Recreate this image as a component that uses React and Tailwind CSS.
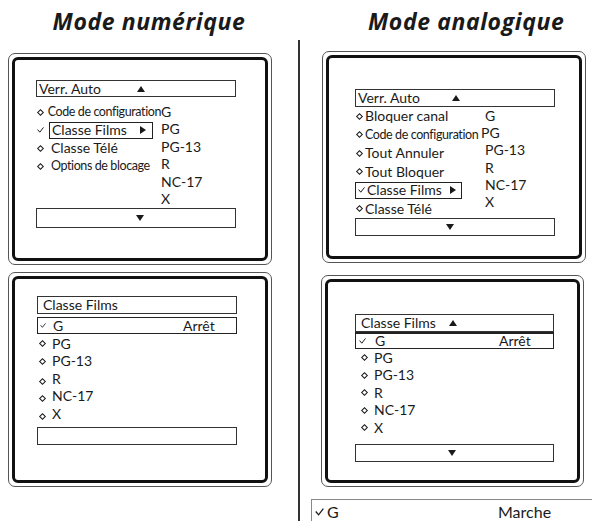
import React from 'react';

const Up = () => (
  <svg width="8" height="6" viewBox="0 0 8 6"><path d="M4 0L8 6H0z" fill="#1a1a1a" /></svg>
);
const Down = () => (
  <svg width="8" height="6" viewBox="0 0 8 6"><path d="M0 0H8L4 6z" fill="#1a1a1a" /></svg>
);
const Right = () => (
  <svg width="6" height="8" viewBox="0 0 6 8"><path d="M0 0L6 4L0 8z" fill="#1a1a1a" /></svg>
);
const Check = ({ size = 7 }) => (
  <svg width={size} height={size - 1} viewBox="0 0 7 6">
    <path d="M0.6 2.6L2.8 5.2L6.5 0.4" fill="none" stroke="#1a1a1a" strokeWidth="1" />
  </svg>
);
const Diamond = ({ className = '' }) => (
  <span className={`block w-[5px] h-[5px] border border-[#1a1a1a] rotate-45 ${className}`} />
);

// double framed screen, thin grey outside and heavy black inside
const Panel = ({ className = '', inner = '', children }) => (
  <div className={`shrink-0 border border-[#555] rounded-[7px] p-[3px] ${className}`}>
    <div className={`h-full border-[3px] border-[#111] rounded-[6px] ${inner}`}>{children}</div>
  </div>
);

const Row = ({ children, h = 'h-[18px]', mark = 'w-[15px] pl-[2px]', small }) => (
  <div className={`flex items-center ${h}`}>
    <span className={`flex items-center ${mark}`}>
      <Diamond />
    </span>
    <span className={small ? 'text-[12.5px] tracking-[-0.4px] whitespace-nowrap' : 'whitespace-nowrap'}>{children}</span>
  </div>
);

export default function App() {
  return (
    <div className="w-[592px] h-[521px] bg-white overflow-hidden flex font-['Lato',sans-serif] text-[14px] text-[#1a1a1a] leading-none">
      {/* Mode numérique */}
      <div className="w-[298px] shrink-0 flex flex-col">
        <div className="h-[40px] shrink-0 pt-[8px] text-center font-['Open_Sans',sans-serif] text-[23px] font-bold italic leading-[26px] tracking-[0.6px]">Mode numérique</div>

        <Panel className="ml-[8px] mt-[13px] w-[264px] h-[212px]" inner="pl-[21px] pt-[20px]">
          <div className="w-[200px] h-[17px] border border-[#333] flex items-center pl-[2px]">
            <span className="w-[98px]">Verr. Auto</span>
            <Up />
          </div>
          <div className="flex mt-[6px] h-[104px]">
            <div className="w-[125px]">
              <Row small>Code de configuration</Row>
              <div className="flex items-center h-[18px]">
                <span className="w-[13px] pl-[1px]"><Check /></span>
                <span className="w-[104px] h-[17px] border border-[#222] flex items-center justify-between pl-[2px] pr-[6px]">
                  Classe Films <Right />
                </span>
              </div>
              <Row>Classe Télé</Row>
              <Row small>Options de blocage</Row>
            </div>
            <div className="flex flex-col leading-[17.4px]">
              <span>G</span>
              <span>PG</span>
              <span>PG-13</span>
              <span>R</span>
              <span>NC-17</span>
              <span>X</span>
            </div>
          </div>
          <div className="mt-[1px] w-[200px] h-[20px] border border-[#333] flex items-center justify-center pl-[8px]">
            <Down />
          </div>
        </Panel>

        <Panel className="ml-[8px] mt-[7px] w-[264px] h-[215px]" inner="pl-[22px] pt-[17px]">
          <div className="w-[200px] h-[18px] border border-[#333] flex items-center pl-[5px]">Classe Films</div>
          <div className="mt-[3px] w-[200px] h-[17px] border border-[#222] flex items-center pl-[2px]">
            <span className="w-[13px]"><Check size={6} /></span>
            <span className="w-[130px]">G</span>
            <span>Arrêt</span>
          </div>
          <div className="mt-[1px]">
            <Row h="h-[17.5px]" mark="w-[15px] pl-[3px]">PG</Row>
            <Row h="h-[17.5px]" mark="w-[15px] pl-[3px]">PG-13</Row>
            <Row h="h-[17.5px]" mark="w-[15px] pl-[3px] pt-[5px]">R</Row>
            <Row h="h-[17.5px]" mark="w-[15px] pl-[3px] pt-[5px]">NC-17</Row>
            <Row h="h-[17.5px]" mark="w-[15px] pl-[3px] pt-[5px]">X</Row>
          </div>
          <div className="mt-[4px] w-[200px] h-[18px] border border-[#333]" />
        </Panel>
      </div>

      {/* Mode analogique */}
      <div className="flex-1 flex flex-col">
        <div className="h-[40px] shrink-0 pt-[8px] pl-[70px] font-['Open_Sans',sans-serif] text-[23px] font-bold italic leading-[26px] tracking-[0.6px]">Mode analogique</div>
        <div className="flex-1 border-l-2 border-[#333] pl-[22px] flex flex-col">
          <Panel className="mt-[11px] w-[264px] h-[212px]" inner="pl-[26px] pt-[31px]">
            <div className="w-[200px] h-[18px] border border-[#333] flex items-center pl-[2px]">
              <span className="w-[94px]">Verr. Auto</span>
              <Up />
            </div>
            <div className="flex">
              <div className="w-[130px]">
                <Row h="h-[18.5px]" mark="w-[10px] pl-[2px]">Bloquer canal</Row>
                <Row h="h-[18.5px]" mark="w-[10px] pl-[2px]" small>Code de configuration</Row>
                <Row h="h-[18.5px]" mark="w-[10px] pl-[2px]">Tout Annuler</Row>
                <Row h="h-[18.5px]" mark="w-[10px] pl-[2px]">Tout Bloquer</Row>
                <div className="flex items-center h-[18.5px]">
                  <span className="w-[107px] h-[17px] border border-[#222] flex items-center pl-[2px] pr-[5px]">
                    <span className="w-[9px]"><Check /></span>
                    <span className="flex-1">Classe Films</span>
                    <Right />
                  </span>
                </div>
                <Row h="h-[18.5px]" mark="w-[10px] pl-[2px]">Classe Télé</Row>
              </div>
              <div className="flex flex-col leading-[17.2px]">
                <span>G</span>
                <span className="-ml-[4px]">PG</span>
                <span>PG-13</span>
                <span>R</span>
                <span>NC-17</span>
                <span>X</span>
              </div>
            </div>
            <div className="w-[200px] h-[18px] border border-[#333] flex items-center justify-center pr-[10px]">
              <Down />
            </div>
          </Panel>

          <Panel className="mt-[12px] -ml-[1px] w-[263px] h-[212px]" inner="pl-[27px] pt-[32px]">
            <div className="w-[199px] h-[18px] border border-[#333] flex items-center pl-[5px]">
              <span className="w-[88px]">Classe Films</span>
              <Up />
            </div>
            <div className="w-[199px] h-[17px] border border-t-2 border-[#222] flex items-center pl-[3px]">
              <span className="w-[16px]"><Check /></span>
              <span className="w-[124px]">G</span>
              <span>Arrêt</span>
            </div>
            <div>
              <Row h="h-[17.5px]" mark="w-[19px] pl-[7px]">PG</Row>
              <Row h="h-[17.5px]" mark="w-[19px] pl-[7px]">PG-13</Row>
              <Row h="h-[17.5px]" mark="w-[19px] pl-[7px]">R</Row>
              <Row h="h-[17.5px]" mark="w-[19px] pl-[7px]">NC-17</Row>
              <Row h="h-[17.5px]" mark="w-[19px] pl-[7px]">X</Row>
            </div>
            <div className="mt-[7px] w-[199px] h-[18px] border border-[#333] flex items-center justify-center pr-[6px]">
              <Down />
            </div>
          </Panel>

          <div className="shrink-0 mt-[12px] -ml-[11px] w-[300px] h-[40px] border border-[#888] flex items-start pt-[4px] pl-[3px] text-[16px]">
            <span className="w-[12px] pt-[4px]"><Check size={9} /></span>
            <span className="w-[171px]">G</span>
            <span>Marche</span>
          </div>
        </div>
      </div>
    </div>
  );
}
